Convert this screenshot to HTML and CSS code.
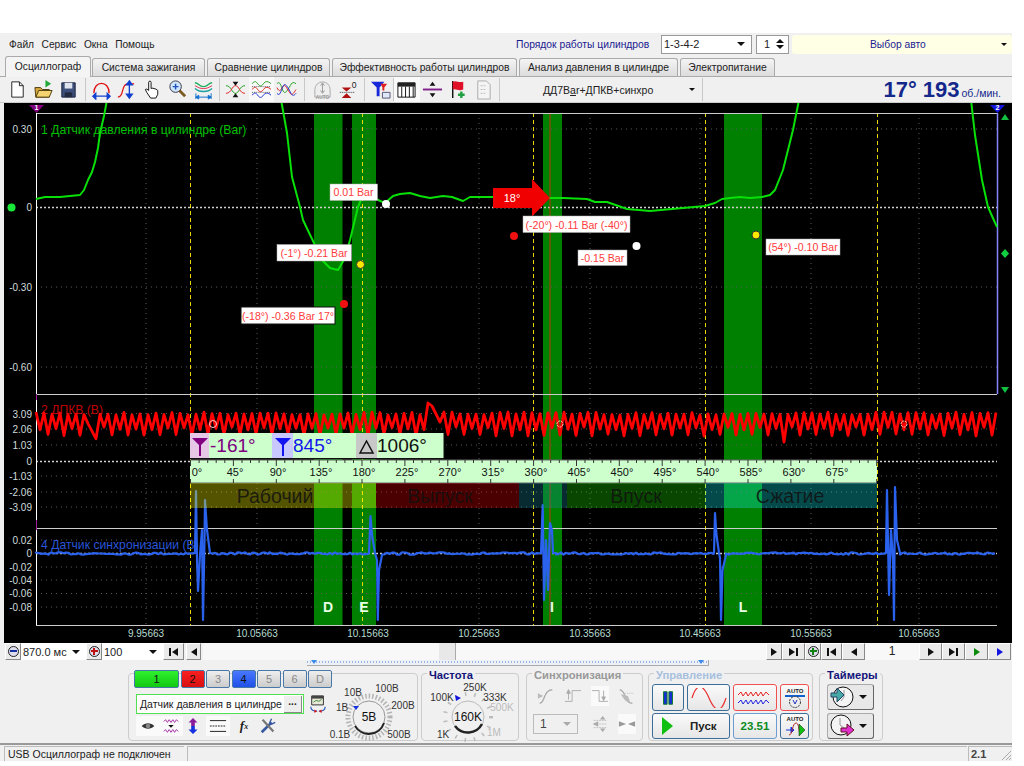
FILE: index.html
```html
<!DOCTYPE html>
<html lang="ru">
<head>
  <meta charset="UTF-8">
  <title>USB Осциллограф</title>
  <link rel="stylesheet" href="styles.css">
  <script defer src="script.js"></script>
</head>
<body>
<div class="app">

  <div class="topbar">
    <div class="menu"><span>Файл</span><span>Сервис</span><span>Окна</span><span>Помощь</span></div>
    <div class="order">
      <span class="order-label">Порядок работы цилиндров</span>
      <div class="combo order-combo"><span>1-3-4-2</span><i class="arrow"></i></div>
      <div class="combo spin"><span>1</span><b class="spin-arrows"><i class="arrow up"></i><i class="arrow"></i></b></div>
      <div class="auto-pick"><span>Выбор авто</span><i class="arrow small"></i></div>
    </div>
  </div>

  <div class="tabs">
    <div class="tab active">Осциллограф</div>
    <div class="tab w113">Система зажигания</div>
    <div class="tab w122">Сравнение цилиндров</div>
    <div class="tab w185">Эффективность работы цилиндров</div>
    <div class="tab w159">Анализ давления в цилиндре</div>
    <div class="tab w95">Электропитание</div>
  </div>

  <div class="toolbar">
    <div class="tool"><svg viewBox="0 0 22 22"><path d="M5 3h8l4 4v12H5z" fill="#fff" stroke="#222"/><path d="M13 3v4h4" fill="none" stroke="#222"/></svg></div>
    <div class="tool"><svg viewBox="0 0 22 22"><path d="M2 9h6l2 2h7v8H3z" fill="#d8a93a" stroke="#4a3a10"/><path d="M3 19l3-7h14l-3 7z" fill="#f3d470" stroke="#4a3a10"/><path d="M13 7V1l6 4-6 4z" fill="#21a83a"/></svg></div>
    <div class="tool"><svg viewBox="0 0 22 22"><path d="M4 4h14v15H4z" fill="#3d4f7a" stroke="#1a2340"/><path d="M7 4h8v6H7z" fill="#dfe4ee"/><path d="M7 14h8v5H7z" fill="#222a40"/></svg></div>
    <i class="sep"></i>
    <div class="tool"><svg viewBox="0 0 22 22"><path d="M3 15C3 1 19 1 19 15" fill="none" stroke="#e01010" stroke-width="1.4"/><path d="M2 18h18M2 18l3-3v6zM20 18l-3-3v6z" stroke="#1040d0" fill="#1040d0" stroke-width="1.4"/></svg></div>
    <div class="tool"><svg viewBox="0 0 22 22"><path d="M2 19c7 0 3-14 10-14h7" fill="none" stroke="#e01010" stroke-width="1.3"/><path d="M14 3v16M14 2l-3 4h6zM14 20l-3-4h6z" stroke="#1040d0" fill="#1040d0" stroke-width="1.4"/></svg></div>
    <div class="tool"><svg viewBox="0 0 22 22"><path d="M7 12V3.500a1.200 1.200 0 0 1 2.500 0V10l1-.5 2 .5 2 .5 2 1.500v4l-2 4H9l-4-6-1.500-3 1.500-.5z" fill="#fff" stroke="#111"/></svg></div>
    <div class="tool"><svg viewBox="0 0 22 22"><circle cx="9" cy="8" r="6" fill="#cfe6ff" stroke="#334"/><path d="M9 5v6M6 8h6" stroke="#2050c0" stroke-width="1.500"/><path d="M13 12l6 6" stroke="#7a5a20" stroke-width="3"/></svg></div>
    <div class="tool"><svg viewBox="0 0 22 22"><path d="M2 4c4 0 4 4 9 4s5-4 9-4" fill="none" stroke="#20b060" stroke-width="1.500"/><path d="M2 10c4 3 5 3 9 3s5 0 9-3" fill="none" stroke="#20a0a0" stroke-width="1.500"/><path d="M2 7c4 2 5 3 9 3s5-1 9-3" fill="none" stroke="#e03050" stroke-width="1"/><path d="M3 19h16M3 19l3-2v4zM19 19l-3-2v4zM3 15v6M19 15v6" stroke="#1070d0" fill="#1070d0"/></svg></div>
    <i class="sep"></i>
    <div class="tool"><svg viewBox="0 0 22 22"><path d="M1 7c6 0 6 8 10 8s4-8 10-8" fill="none" stroke="#20a020"/><path d="M1 15c6 0 6-8 10-8s4 8 10 8" fill="none" stroke="#e02020"/><path d="M8 3h6l-3 4zM8 19h6l-3-4z" fill="#111"/></svg></div>
    <div class="tool pressed"><svg viewBox="0 0 22 22"><path d="M1 5c3-3 4-3 6 0s4 3 6 0 5-3 8 0" fill="none" stroke="#20a020"/><path d="M1 11c3-3 4-3 6 0s4 3 6 0 5-3 8 0" fill="none" stroke="#e02020"/><path d="M1 17c3-3 4-3 6 0s4 3 6 0 5-3 8 0" fill="none" stroke="#2030d0"/><path d="M1 8h20M1 14h20" stroke="#555" stroke-dasharray="1 1"/></svg></div>
    <div class="tool"><svg viewBox="0 0 22 22"><path d="M1 5c5-6 5 14 10 8s5-12 10-8" fill="none" stroke="#20a020"/><path d="M1 9c5 10 5-8 10 0s5 10 10 2" fill="none" stroke="#e02020"/><path d="M1 15c5 6 5-14 10-8s5 14 10 8" fill="none" stroke="#2030d0"/></svg></div>
    <i class="sep wide"></i>
    <div class="tool"><svg viewBox="0 0 22 22"><path d="M3 19V11a8 8 0 0 1 16 0v8z" fill="#eee" stroke="#aaa"/><path d="M11 5v9M9 7l2-3 2 3M9 12l2 3 2-3" fill="none" stroke="#999"/><text x="11" y="21" class="icon-note">AUTO</text></svg></div>
    <div class="tool"><svg viewBox="0 0 22 22"><path d="M5 9h10l-5 4zM5 20h10l-5-5z" fill="#b01010"/><path d="M3 14h16" stroke="#333" stroke-dasharray="1 1"/><text x="18" y="9" class="icon-digit">0</text></svg></div>
    <i class="sep"></i>
    <div class="tool"><svg viewBox="0 0 22 22"><path d="M1 3h14L10 9v9H7V9z" fill="#1828d8"/><path d="M11 5h7l-3 4v3h-2V9z" fill="#e02020"/><path d="M13 14h8v6h-8z" fill="#dfe8f8" stroke="#557"/></svg></div>
    <i class="sep flat"></i>
    <div class="tool pressed"><svg viewBox="0 0 22 22"><path d="M2 4h18v15H2z" fill="#fff" stroke="#111"/><path d="M2 4h18v4H2z" fill="#222"/><path d="M6 8v11M10 8v11M14 8v11M18 8v11" stroke="#111"/></svg></div>
    <div class="tool"><svg viewBox="0 0 22 22"><path d="M1 11h20" stroke="#80208a" stroke-width="2"/><path d="M8 7h6l-3-4zM8 15h6l-3 4z" fill="#111"/></svg></div>
    <div class="tool"><svg viewBox="0 0 22 22"><path d="M6 2v18" stroke="#111" stroke-width="1.500"/><path d="M6 3c4-2 5 1 11 0v8c-5 2-7-1-11 0z" fill="#e01028"/><path d="M15 13v7M11.500 16.500h7" stroke="#20a040" stroke-width="2.500"/></svg></div>
    <div class="tool"><svg viewBox="0 0 22 22"><path d="M5 2h9l4 4v15H5z" fill="#f4f4f4" stroke="#aaa"/><path d="M8 7h6M8 11h6M8 15h6" stroke="#bbb" stroke-dasharray="2 1"/></svg></div>
    <i class="sep"></i>
    <div class="preset"><span>ДД7B<u>a</u>r+ДПКВ+синхро</span><i class="arrow small"></i></div>
    <i class="sep flat"></i>
    <div class="rpm"><b>17° 193</b><span>об./мин.</span></div>
  </div>

  <div class="chart">
    <svg class="scope" viewBox="4 103 1008 540" width="1008" height="540">
      <rect x="4" y="103" width="1008" height="540" fill="#000"/>

      <g fill="#008000">
        <rect x="314" y="113" width="28.500" height="512"/>
        <rect x="352" y="113" width="24" height="512"/>
        <rect x="543" y="113" width="19" height="512"/>
        <rect x="724" y="113" width="38" height="512"/>
      </g>

      <path class="grid" d="M146 113V625M257 113V625M368 113V625M479 113V625M590 113V625M700 113V625M811 113V625M919 113V625M36 129H997M36 287H997M36 367H997M36 413.500H997M36 429H997M36 445H997M36 476H997M36 492H997M36 507H997M36 540H997M36 567H997M36 580H997M36 593.500H997M36 607H997"/>
      <path class="zero" d="M36 207.500H997M36 461.500H997M36 553.500H997"/>
      <path class="marks" d="M190.500 113V625M362.500 113V625M533.500 113V625M705.500 113V625M877.500 113V625"/>
      <path d="M550 113V625" stroke="#c03010" stroke-width="1"/>

      <g class="frame">
        <path d="M36 113.500H997M36 394.500H997M36 528.500H997M36 625.500H997" stroke="#ccc"/>
        <path d="M36.500 113V625" stroke="#fff"/>
        <path d="M36.500 394V400M36.500 520V530" stroke="#a020a0"/>
        <path d="M997.500 113V394" stroke="#8484ff" stroke-width="1.500"/>
      </g>

      <path d="M29 105H44L36.500 113z" fill="#800080"/>
      <text x="36.500" y="110" class="pin">1</text>
      <path d="M990 105H1005L997.500 113z" fill="#1414e0"/>
      <text x="997.500" y="110" class="pin">2</text>
      <path d="M1001 120L1005 114 1009 120z" fill="#10c040"/>
      <path d="M1005 249L1009 253.500 1005 258 1001 253.500z" fill="#10d040"/>
      <path d="M1001 387L1005 393 1009 387z" fill="#10c040"/>
      <circle cx="11.500" cy="207.500" r="4" fill="#18e838"/>

      <g class="axis">
        <text x="32" y="133">0.30</text><text x="32" y="211">0</text><text x="32" y="291">-0.30</text><text x="32" y="371">-0.60</text>
        <text x="32" y="418">3.09</text><text x="32" y="433">2.06</text><text x="32" y="449">1.03</text><text x="32" y="465">0</text><text x="32" y="480">-1.03</text><text x="32" y="496">-2.06</text><text x="32" y="511">-3.09</text>
        <text x="32" y="544">0.02</text><text x="32" y="557">0</text><text x="32" y="571">-0.02</text><text x="32" y="584">-0.04</text><text x="32" y="597">-0.06</text><text x="32" y="611">-0.08</text>
      </g>
      <g class="time">
        <text x="146" y="637">9.95663</text><text x="257" y="637">10.05663</text><text x="368" y="637">10.15663</text><text x="479" y="637">10.25663</text><text x="590" y="637">10.35663</text><text x="700" y="637">10.45663</text><text x="811" y="637">10.55663</text><text x="919" y="637">10.65663</text>
      </g>

      <text x="41" y="134" class="chan ch1">1 Датчик давления в цилиндре (Bar)</text>
      <text x="41" y="414" class="chan ch2">2 ДПКВ (B)</text>
      <text x="41" y="549" class="chan ch4">4 Датчик синхронизации (B)</text>

      <path id="red-trace" class="trace-red"/>
      <path id="blue-trace" class="trace-blue"/>
      <polyline class="trace-green" points="36,199 45,197 60,197 80,195 84,190 88,180 92,172 95,162 98,148 100,133 104,116 107,100"/>
      <polyline class="trace-green" points="281,100 282,105 287,133 292,177 300,207 303,220 313,241 322,260 330,268 338,270 345,258 350,240 358,207 363,195 370,190 378,200 385,203 393,196 400,194 410,193 420,196 430,198 443,196 452,197 463,201 470,197 493,197 510,197 530,198 563,198 587,199 595,202 607,202 627,209 650,211 683,208 705,206 715,203 722,199 730,198 740,197 750,198 762,197 770,195 775,190 783,170 793,130 799,100"/>
      <polyline class="trace-green" points="971,100 975,135 982,180 988,207 992,216 997,227"/>

      <text x="328" y="612" class="band-name">D</text>
      <text x="364" y="612" class="band-name">E</text>
      <text x="552" y="612" class="band-name">I</text>
      <text x="743" y="612" class="band-name">L</text>

      <g class="cursor-row">
        <rect x="190" y="433" width="254" height="25" fill="#ccffcc"/>
        <path d="M444 433V458.500H190" fill="none" stroke="#111"/>
        <rect x="190" y="433" width="19" height="25" fill="#e6c8e6"/>
        <rect x="272" y="433" width="21" height="25" fill="#c8c8ff"/>
        <rect x="356" y="433" width="21" height="25" fill="#c8c8c8"/>
        <path d="M192 438H208L201 445V456H199V445z" fill="#800080"/>
        <path d="M275 438H291L284 445V456H282V445z" fill="#1414f0"/>
        <path d="M360 453L366.500 441 373 453z" fill="none" stroke="#111" stroke-width="1.500"/>
        <text x="210" y="452" class="cursor-val pur">-161°</text>
        <text x="293" y="452" class="cursor-val blu">845°</text>
        <text x="377" y="452" class="cursor-val blk">1006°</text>
      </g>

      <rect x="190" y="460" width="687" height="23" fill="#ccffcc"/>
      <path d="M190 460H877M190 483H877" stroke="#666"/>
      <path id="ruler-ticks" stroke="#333" fill="none"/>
      <g class="ruler">
        <text x="197" y="476">0°</text><text x="235" y="476">45°</text><text x="278" y="476">90°</text><text x="321" y="476">135°</text><text x="364" y="476">180°</text><text x="407" y="476">225°</text><text x="450" y="476">270°</text><text x="493" y="476">315°</text><text x="536" y="476">360°</text><text x="579" y="476">405°</text><text x="622" y="476">450°</text><text x="665" y="476">495°</text><text x="708" y="476">540°</text><text x="751" y="476">585°</text><text x="794" y="476">630°</text><text x="837" y="476">675°</text>
      </g>

      <g class="strokes">
        <rect x="190" y="483" width="186" height="25" fill="#ffff00" fill-opacity=".33"/>
        <rect x="376" y="483" width="143" height="25" fill="#ff0000" fill-opacity=".29"/>
        <rect x="519" y="483" width="48" height="25" fill="#1890a0" fill-opacity=".3"/>
        <rect x="567" y="483" width="138" height="25" fill="#20ff00" fill-opacity=".28"/>
        <rect x="705" y="483" width="172" height="25" fill="#10ffff" fill-opacity=".29"/>
        <text x="275" y="503">Рабочий</text>
        <text x="440" y="503">Выпуск</text>
        <text x="636" y="503">Впуск</text>
        <text x="790" y="503">Сжатие</text>
      </g>

      <g class="notes">
        <path d="M493 188H532V179L550 198 532 216.500V208H493z" fill="#f00000"/>
        <text x="512" y="202" class="arrow-val">18°</text>

        <rect x="330" y="184" width="47.500" height="16.500" class="note-box"/><text x="353.500" y="196">0.01 Bar</text>
        <rect x="277" y="244.500" width="74.500" height="16.500" class="note-box"/><text x="314" y="257">(-1°) -0.21 Bar</text>
        <rect x="241" y="307" width="94" height="17" class="note-box dark"/><text x="288" y="319.500">(-18°) -0.36 Bar 17°</text>
        <rect x="523" y="216" width="107" height="16.500" class="note-box"/><text x="576.500" y="228.500">(-20°) -0.11 Bar (-40°)</text>
        <rect x="578" y="250" width="49" height="15.500" class="note-box"/><text x="602.500" y="262">-0.15 Bar</text>
        <rect x="766" y="239" width="74" height="16" class="note-box"/><text x="803" y="251">(54°) -0.10 Bar</text>

        <circle cx="386" cy="204" r="4" fill="#fff"/>
        <circle cx="360.500" cy="264.500" r="4" fill="#ffe800" stroke="#333"/>
        <circle cx="344" cy="304" r="4" fill="#f01010"/>
        <circle cx="514" cy="236" r="4" fill="#f01010"/>
        <circle cx="636.500" cy="246" r="4" fill="#fff"/>
        <circle cx="756" cy="235" r="4" fill="#ffe800" stroke="#333"/>
        <circle cx="213" cy="424" r="3.500" fill="none" stroke="#ffc8c8"/>
        <circle cx="560" cy="424" r="3" fill="none" stroke="#ffc8c8" stroke-dasharray="2 1"/>
        <circle cx="904" cy="424" r="3" fill="none" stroke="#ffc8c8" stroke-dasharray="2 1"/>
      </g>
    </svg>
  </div>

  <div class="scrollrow">
    <div class="sbtn round"><i class="minus"></i></div>
    <div class="field w64"><span>870.0 мс</span><i class="arrow"></i></div>
    <div class="sbtn round"><i class="plus red"></i></div>
    <div class="field w61"><span>100</span><i class="arrow"></i></div>
    <div class="sbtn w21"><i class="bar"></i><i class="tri left"></i></div>
    <div class="sbtn w15"><i class="tri left"></i></div>
    <div class="track"><div class="thumb"></div></div>
    <div class="sbtn w16"><i class="tri"></i></div>
    <div class="sbtn w23"><i class="tri"></i><i class="bar"></i></div>
    <div class="sbtn round w17"><i class="plus green"></i></div>
    <div class="sbtn w21"><i class="bar"></i><i class="tri left"></i></div>
    <div class="sbtn w23"><i class="tri left"></i></div>
    <div class="pageno">1</div>
    <div class="sbtn w23"><i class="tri"></i></div>
    <div class="sbtn w23"><i class="tri"></i><i class="bar"></i></div>
    <div class="sbtn w23"><i class="tri gr"></i></div>
    <div class="sbtn w23"><i class="tri bl"></i></div>
  </div>

  <div class="rangebar"><div class="range"></div></div>

  <div class="panels">
    <div class="panel p-chan">
      <div class="chan-left">
        <div class="chan-tabs">
          <div class="ch-btn first on-green">1</div>
          <div class="ch-btn on-red">2</div>
          <div class="ch-btn off">3</div>
          <div class="ch-btn on-blue">4</div>
          <div class="ch-btn off">5</div>
          <div class="ch-btn off">6</div>
          <div class="ch-btn off">D</div>
        </div>
        <div class="chan-name">
          <div class="name-box"><span>Датчик давления в цилиндре</span><b>...</b></div>
          <svg class="ico18" viewBox="0 0 20 20"><path d="M3 1h13v10H3z" fill="#e8e8d8" stroke="#222"/><path d="M3 1h13v3H3z" fill="#444"/><path d="M5 8l3-2 3 1 3-2" fill="none" stroke="#383"/><path d="M2 13c0 4 4 5 7 5M18 13c0 4-4 5-7 5" fill="none" stroke="#25b" stroke-width="1.300"/><path d="M6 16l3 2-3 2zM14 16l-3 2 3 2z" fill="#d11"/></svg>
        </div>
        <div class="chan-tools">
          <div class="mini pressed w23"><svg viewBox="0 0 20 20"><path d="M3 10c4-4 10-4 14 0-4 4-10 4-14 0z" fill="#333"/><circle cx="10" cy="10" r="2.500" fill="#888"/></svg></div>
          <div class="mini pressed w24"><svg viewBox="0 0 20 20"><path d="M2 5l2-2 2 3 2-3 2 3 2-3 2 3 2-3 2 2" fill="none" stroke="#a020a0"/><path d="M2 16l2-2 2 3 2-3 2 3 2-3 2 3 2-3 2 2" fill="none" stroke="#a020a0"/><path d="M7 9h6l-3 3z" fill="#111"/></svg></div>
          <div class="mini w20"><svg viewBox="0 0 20 20"><path d="M10 1l5 5h-3v4H8V6H5z" fill="#8a1a9a"/><path d="M10 19l5-5h-3v-4H8v4H5z" fill="#1430e0"/></svg></div>
          <div class="mini pressed w24 gap3"><svg viewBox="0 0 20 20"><path d="M1 4h18M1 16h18" stroke="#111"/><path d="M1 10h18" stroke="#111" stroke-dasharray="2 1"/></svg></div>
          <div class="mini fx w20">f<sub>x</sub></div>
          <div class="mini w20"><svg viewBox="0 0 20 20"><path d="M3 17L14 6" stroke="#3858a0" stroke-width="3"/><path d="M14 2l-2 4 2 2 4-2" fill="none" stroke="#3858a0" stroke-width="1.500"/><path d="M4 3l12 13" stroke="#777" stroke-width="2.500"/></svg></div>
        </div>
      </div>
      <svg class="knob" viewBox="0 0 88 62" width="88" height="62">
        <circle cx="39" cy="37" r="21" fill="none" stroke="#b4b4b4" stroke-width="5" stroke-dasharray="1.500 2"/>
        <circle cx="39" cy="37" r="16" fill="#f0f0f0" stroke="#999"/>
        <path d="M25 46a16 16 0 0 0 29-3" fill="none" stroke="#222" stroke-width="2"/>
        <path d="M23 26h6l-3 4z" fill="#1430e0"/>
        <text x="39" y="41" class="knob-mid">5В</text>
        <text x="23" y="16">10В</text><text x="57" y="12">100В</text><text x="73" y="29">200В</text><text x="12" y="31">1В</text><text x="10" y="58">0.1В</text><text x="69" y="58">500В</text>
      </svg>
    </div>

    <div class="panel p-freq">
      <span class="panel-title navy">Частота</span>
      <svg class="knob" viewBox="0 0 98 66" width="98" height="66">
        <circle cx="46" cy="43" r="23" fill="none" stroke="#bbb" stroke-width="4" stroke-dasharray="1.500 8"/>
        <circle cx="46" cy="43" r="16" fill="#f0f0f0" stroke="#bbb"/>
        <path d="M33 52a16 16 0 0 0 27-2" fill="none" stroke="#222" stroke-width="2.500"/>
        <path d="M33 21l6 3-5 3z" fill="#1414e0"/>
        <text x="46" y="47" class="knob-mid">160K</text>
        <text x="20" y="26.500">100K</text><text x="53" y="17">250K</text><text x="73" y="26.500">333K</text><text x="80" y="37" class="dim">500K</text><text x="21" y="64">1K</text><text x="72" y="62" class="dim">1M</text>
      </svg>
    </div>

    <div class="panel p-sync">
      <span class="panel-title grey">Синхронизация</span>
      <div class="sync-grid">
        <div class="mini"><svg viewBox="0 0 20 20"><path d="M3 18c6 0 4-15 14-15" fill="none" stroke="#aaa" stroke-width="1.500"/><path d="M1 7l6 3-6 3z" fill="#bbb"/></svg></div>
        <div class="mini"><svg viewBox="0 0 20 20"><path d="M1 16h8V4h10" fill="none" stroke="#aaa"/><path d="M5 3v11M3 7l2-4 2 4z" stroke="#aaa" fill="#aaa"/></svg></div>
        <div class="mini pressed"><svg viewBox="0 0 20 20"><path d="M1 4h8v12h10" fill="none" stroke="#aaa"/><path d="M14 4v11M12 11l2 4 2-4z" stroke="#aaa" fill="#aaa"/></svg></div>
        <div class="mini"><svg viewBox="0 0 20 20"><path d="M2 3c8 2 4 15 14 15" fill="none" stroke="#aaa" stroke-width="1.500"/><path d="M8 7h10" stroke="#bbb" stroke-dasharray="1 1"/><path d="M3 8l8 2 3 8-6-3z" fill="#bbb"/></svg></div>
        <div class="combo sync-combo"><span>1</span><i class="arrow pale"></i></div>
        <div class="mini"><svg viewBox="0 0 20 20"><path d="M3 10h14M3 6h14M3 14h14" stroke="#bbb" stroke-dasharray="2 1"/><path d="M2 10l6-3v6zM10 5h6l-3-4zM10 15h6l-3 4z" fill="#aaa"/></svg></div>
        <div class="mini pressed"><svg viewBox="0 0 20 20"><path d="M1 7l8 3-8 3zM19 7l-8 3 8 3z" fill="#999"/></svg></div>
      </div>
    </div>

    <div class="panel p-ctl">
      <span class="panel-title pale">Управление</span>
      <div class="ctl-grid">
        <div class="ctl"><svg viewBox="0 0 20 20" class="ico18"><path d="M5 3h4v14H5zM11 3h4v14h-4z" fill="#1430d0" stroke="#0b7a20"/></svg></div>
        <div class="ctl"><svg viewBox="0 0 36 20" class="ico-w"><path d="M1 10C6-6 12-4 18 10s12 16 17 0" fill="none" stroke="#e83030" stroke-width="1.200"/></svg></div>
        <div class="ctl red-edge"><svg viewBox="0 0 36 20" class="ico-w"><path d="M1 7l3-3 2 4 3-4 2 4 3-4 2 4 3-4 2 4 3-4 2 4 3-4 3 3" fill="none" stroke="#e82020"/><path d="M1 15l3-3 2 4 3-4 2 4 3-4 2 4 3-4 2 4 3-4 2 4 3-4 3 3" fill="none" stroke="#2020e0"/></svg></div>
        <div class="ctl red-edge"><svg viewBox="0 0 22 22" class="ico20"><text x="11" y="6" class="auto-note">AUTO</text><path d="M1 9h20" stroke="#1060d0" stroke-width="2"/><circle cx="11" cy="15" r="5.500" fill="#eee" stroke="#333" stroke-dasharray="2 1"/><path d="M9 13l2 4 2-4" fill="none" stroke="#2030c0"/></svg></div>
        <div class="ctl span2 start"><i class="play"></i><b>Пуск</b></div>
        <div class="ctl pale-edge value">23.51</div>
        <div class="ctl"><svg viewBox="0 0 22 22" class="ico20"><text x="11" y="6" class="auto-note">AUTO</text><path d="M2 15h8M7 12l3 3-3 3z" fill="#1430e0" stroke="#1430e0"/><path d="M5 20c4 0 3-12 7-12s2 12 5 10" fill="none" stroke="#b03030"/><path d="M15 9l6 6-6 6z" fill="#10c010" stroke="#111" stroke-width=".5"/></svg></div>
      </div>
    </div>

    <div class="panel p-time">
      <span class="panel-title navy">Таймеры</span>
      <div class="time-col">
        <div class="ctl grey-edge"><svg viewBox="0 0 24 24" class="ico22"><circle cx="13" cy="12" r="10" fill="#f4f4f4" stroke="#111"/><path d="M14 5v7l-3 4" fill="none" stroke="#999"/><path d="M1 8h6V3l7 7-7 7v-5H1z" fill="#48a8a8" stroke="#246"/></svg><i class="arrow"></i></div>
        <div class="ctl grey-edge"><svg viewBox="0 0 24 24" class="ico22"><circle cx="11" cy="11" r="10" fill="#f4f4f4" stroke="#111"/><path d="M10 4v7l4 3" fill="none" stroke="#999"/><path d="M11 14h6V10l7 6-7 6v-4h-6z" fill="#e030d0" stroke="#612"/></svg><i class="arrow"></i></div>
      </div>
    </div>
  </div>

  <div class="status">
    <div class="cell c1">USB Осциллограф не подключен</div>
    <div class="cell c2"></div>
    <div class="cell c3"><span>2.1</span><svg class="grip" viewBox="0 0 12 12" width="12" height="12"><path d="M11 2L2 11M11 6L6 11M11 9L9 11" stroke="#aaa"/></svg></div>
  </div>

</div>
</body>
</html>
```

FILE: styles.css
```css
body {
  margin: 0;
  padding: 0;
  background-color: white;
  font-family: "Liberation Sans", Arial, sans-serif;
  font-size: 10.5px;
  color: #222;
  overflow: hidden;
}

.app {
  width: 1012px;
  height: 728px;
  margin-top: 33px;
  background-color: #f0f0f0;
  display: flex;
  flex-direction: column;
}

/* top row */
.topbar {
  height: 22px;
  display: flex;
  align-items: center;
  justify-content: space-between;
}

.menu {
  display: flex;
  gap: 7.5px;
  padding-left: 9px;
  font-size: 10.2px;
}

.order {
  display: flex;
  align-items: center;
  height: 19px;
  font-size: 10.3px;
}

.order-label {
  color: #1a1a90;
  width: 145px;
}

.combo {
  background-color: white;
  border: 1px solid #999;
  box-sizing: border-box;
  height: 19px;
  display: flex;
  align-items: center;
  justify-content: space-between;
  padding: 0 6px 0 2px;
  font-size: 11px;
}

.order-combo { width: 91px; }

.spin {
  width: 33px;
  margin-left: 4px;
  padding: 0 4px 0 7px;
}

.spin-arrows {
  display: flex;
  flex-direction: column;
  gap: 2px;
}

.auto-pick {
  width: 220px;
  height: 19px;
  margin-left: 3px;
  background-color: #ffffe6;
  border-radius: 3px;
  display: flex;
  align-items: center;
  justify-content: space-between;
  color: #1a1a90;
  padding: 0 5px 0 78px;
  box-sizing: border-box;
}

.arrow {
  display: block;
  width: 0;
  height: 0;
  border-left: 4px solid transparent;
  border-right: 4px solid transparent;
  border-top: 4px solid #111;
}

.arrow.up {
  border-top: 0;
  border-bottom: 4px solid #111;
}

.arrow.small {
  border-left-width: 3px;
  border-right-width: 3px;
  border-top-width: 3px;
}

.arrow.pale { border-top-color: #aaa; }

/* tabs */
.tabs {
  height: 21px;
  display: flex;
  align-items: flex-end;
  gap: 2px;
  padding-left: 5px;
  border-bottom: 1px solid #aaa;
  font-size: 10.3px;
}

.tab {
  height: 18px;
  box-sizing: border-box;
  border: 1px solid #aaa;
  border-bottom: 0;
  border-radius: 3px 3px 0 0;
  background: linear-gradient(#f4f4f4, #dcdcdc);
  text-align: center;
  line-height: 17px;
  white-space: nowrap;
}

.tab.active {
  width: 86px;
  height: 21px;
  background: #f4f4f4;
  margin-bottom: -1px;
  line-height: 19px;
  margin-right: -1px;
}

.w113 { width: 113px; }
.w122 { width: 123px; }
.w185 { width: 185px; }
.w159 { width: 159px; }
.w95 { width: 95px; }

/* toolbar */
.toolbar {
  height: 26px;
  display: flex;
  align-items: center;
  padding-left: 5px;
  box-sizing: border-box;
  border-bottom: 1px solid #ccc;
}

.tool {
  width: 25.5px;
  height: 25px;
  display: flex;
  align-items: center;
  justify-content: center;
}

.tool svg {
  width: 21px;
  height: 21px;
}

.pressed { background-color: #fafafa; }

.sep {
  width: 1px;
  height: 23px;
  margin: 0 3px;
  background-color: #c8c8c8;
}

.sep.wide { margin: 0 5px 0 4px; }
.sep.flat { margin: 0; }

.icon-note {
  font-size: 5px;
  fill: #999;
  text-anchor: middle;
  font-weight: bold;
}

.icon-digit {
  font-size: 9px;
  fill: #222;
  text-anchor: middle;
}

.preset {
  width: 199px;
  display: flex;
  align-items: center;
  justify-content: space-between;
  padding: 0 7px 0 40px;
  box-sizing: border-box;
}

.rpm {
  flex: 1;
  text-align: right;
  padding-right: 11px;
  color: #14288c;
}

.rpm b {
  font-size: 22px;
  line-height: 24px;
}

.rpm span {
  font-size: 10.5px;
  margin-left: 2px;
}

/* chart */
.chart {
  height: 540px;
  padding-left: 4px;
}

.scope {
  display: block;
  font-family: "Liberation Sans", Arial, sans-serif;
}

.grid {
  stroke: #5a5a5a;
  stroke-dasharray: 1 4;
  fill: none;
}

.zero {
  stroke: #cfcfcf;
  stroke-dasharray: 2 2;
  stroke-width: 1.300;
  fill: none;
}

.marks {
  stroke: #e8d800;
  stroke-dasharray: 4 3;
  fill: none;
}

.pin {
  font-size: 7px;
  font-weight: bold;
  fill: white;
  text-anchor: middle;
}

.axis text {
  font-size: 10px;
  fill: #d0dcdc;
  text-anchor: end;
}

.time text {
  font-size: 10px;
  fill: #b8dcd0;
  text-anchor: middle;
}

.chan { font-size: 12.2px; }
.ch1 { fill: #00c000; }
.ch2 { fill: #c00000; }
.ch4 { fill: #2a55d8; }

.trace-red {
  fill: none;
  stroke: #ff0000;
  stroke-width: 2.800;
  stroke-linejoin: round;
}

.trace-blue {
  fill: none;
  stroke: #2a62ee;
  stroke-width: 2.200;
  stroke-linejoin: round;
}

.trace-green {
  fill: none;
  stroke: #08e008;
  stroke-width: 2;
  stroke-linejoin: round;
}

.band-name {
  font-size: 14px;
  font-weight: bold;
  fill: #e8ffe8;
  text-anchor: middle;
}

.cursor-val {
  font-size: 19px;
}

.pur { fill: #800080; }
.blu { fill: #1414f0; }
.blk { fill: #111; }

.ruler text {
  font-size: 11px;
  fill: #111;
  text-anchor: middle;
}

.strokes text {
  font-size: 19.5px;
  fill: #111;
  fill-opacity: .85;
  text-anchor: middle;
}

.notes text {
  font-size: 10.6px;
  fill: #ff3c3c;
  text-anchor: middle;
}

.notes .arrow-val {
  font-size: 11px;
  fill: white;
}

.note-box {
  fill: white;
  stroke: #aaa;
  stroke-width: .5;
}

.note-box.dark {
  stroke: #111;
  stroke-width: 1;
}

/* scroll row */
.scrollrow {
  height: 17px;
  display: flex;
  align-items: stretch;
  padding-left: 5px;
  box-sizing: border-box;
}

.sbtn {
  width: 15px;
  box-sizing: border-box;
  background-color: #eaeaea;
  border-right: 1px solid #888;
  border-bottom: 1px solid #888;
  border-top: 1px solid #fff;
  border-left: 1px solid #fff;
  display: flex;
  align-items: center;
  justify-content: center;
  gap: 1px;
  flex-shrink: 0;
}

.w15 { width: 15px; margin-left: 2px; }
.w16 { width: 16px; }
.w17 { width: 17px; }
.w21 { width: 21px; }
.w23 { width: 23px; }
.round { width: 16px; }

.minus, .plus {
  display: block;
  position: relative;
  width: 11px;
  height: 11px;
  box-sizing: border-box;
  border: 1px solid #222;
  border-radius: 50%;
  background-color: #dde;
}

.minus::before, .plus::before {
  content: "";
  position: absolute;
  left: 1px;
  right: 1px;
  top: 3px;
  height: 2px;
  background-color: #1430a0;
}

.plus.red::before, .plus.red::after { background-color: #c01010; }
.plus.green::before, .plus.green::after { background-color: #108010; }

.plus::after {
  content: "";
  position: absolute;
  top: 1px;
  bottom: 1px;
  left: 3px;
  width: 2px;
}

.field {
  background-color: white;
  display: flex;
  align-items: center;
  justify-content: space-between;
  padding: 0 6px 0 2px;
  box-sizing: border-box;
  font-size: 11px;
}

.w64 { width: 65px; }
.w61 { width: 61px; }

.tri {
  display: block;
  width: 0;
  height: 0;
  border-top: 4px solid transparent;
  border-bottom: 4px solid transparent;
  border-left: 6px solid #111;
}

.tri.left {
  border-left: 0;
  border-right: 6px solid #111;
}

.tri.gr { border-left-color: #0a8a0a; }
.tri.bl { border-left-color: #1414e0; }

.bar {
  display: block;
  width: 2px;
  height: 8px;
  background-color: #111;
}

.track {
  width: 563px;
  margin-left: 2px;
  background-color: #f8f8f8;
  flex-shrink: 0;
}

.thumb {
  width: 16px;
  height: 100%;
  margin-left: 236px;
  background-color: #e8e8e8;
  border-right: 1px solid #aaa;
}

.pageno {
  width: 54px;
  text-align: center;
  font-size: 12px;
  line-height: 17px;
  background-color: #f8f8f8;
  flex-shrink: 0;
}

.rangebar {
  height: 6px;
  padding-left: 307px;
}

.range {
  position: relative;
  width: 402px;
  height: 6px;
  box-sizing: border-box;
  background-color: #eef0f8;
  border-bottom: 1px solid #aaa;
  border-right: 1px solid #aaa;
  background-image: linear-gradient(90deg, #9ab4e4 1px, transparent 1px);
  background-size: 3px 2px;
  background-repeat: repeat-x;
  background-position: 0 1px;
}

.range::before, .range::after {
  content: "";
  position: absolute;
  top: 0;
  border-left: 3px solid transparent;
  border-right: 3px solid transparent;
  border-top: 4px solid #3a8ae8;
}

.range::before { left: 4px; }
.range::after { right: 4px; }

/* bottom panels */
.panels {
  height: 79px;
  box-sizing: border-box;
  display: flex;
  padding: 7px 0 0 128px;
  border-bottom: 2px solid #999;
}

.panel {
  position: relative;
  height: 68px;
  box-sizing: border-box;
  border: 1px solid #ccc;
  border-radius: 4px;
  flex-shrink: 0;
}

.panel-title {
  position: absolute;
  top: -6px;
  left: 5px;
  padding: 0 2px;
  background-color: #f0f0f0;
  font-weight: bold;
  font-size: 11.2px;
  line-height: 14px;
  white-space: nowrap;
}

.navy { color: #14147a; }
.grey { color: #999; }
.pale { color: #a8c0de; }

.p-chan { width: 290px; margin-right: 3px; display: flex; }
.p-freq { width: 98px; margin-right: 7px; }
.p-sync { width: 117px; margin-right: 5px; }
.p-ctl { width: 165px; margin-right: 6px; }
.p-time { width: 64px; }

.chan-left {
  width: 196px;
  padding-left: 5px;
  flex-shrink: 0;
}

.chan-tabs {
  display: flex;
  gap: 1.500px;
  margin-top: -4px;
  width: 200px;
}

.ch-btn {
  width: 24px;
  height: 18px;
  box-sizing: border-box;
  border: 1px solid #4878a8;
  border-radius: 2px;
  text-align: center;
  line-height: 16px;
  font-size: 11px;
  color: #888;
  background: linear-gradient(#eee, #ccc);
}

.ch-btn.first { width: 45px; }
.on-green { background: linear-gradient(#30f030, #10c810); color: #111; }
.on-red { background: linear-gradient(#f82020, #d81010); color: #111; }
.on-blue { background: linear-gradient(#4878ff, #2050e8); color: #111; }

.chan-name {
  display: flex;
  align-items: center;
  gap: 5px;
  margin-top: 6px;
  padding-left: 2px;
}

.name-box {
  width: 168px;
  height: 20px;
  box-sizing: border-box;
  border: 1px solid #50e050;
  background-color: white;
  display: flex;
  align-items: center;
  justify-content: space-between;
  padding: 0 1px 0 3px;
  font-size: 10.5px;
  white-space: nowrap;
}

.name-box b {
  width: 17px;
  height: 16px;
  background-color: #eee;
  border-right: 1px solid #888;
  border-bottom: 1px solid #888;
  text-align: center;
  line-height: 11px;
  font-size: 10px;
}

.ico18 { width: 18px; height: 18px; }
.ico20 { width: 22px; height: 22px; }
.ico22 { width: 24px; height: 24px; }
.ico-w { width: 36px; height: 20px; }

.chan-tools {
  display: flex;
  align-items: center;
  margin-top: 2px;
  padding-left: 2px;
}

.mini {
  height: 20px;
  display: flex;
  align-items: center;
  justify-content: center;
  flex-shrink: 0;
}

.mini svg { width: 18px; height: 18px; }

.mini.w23 { width: 23px; }
.mini.w24 { width: 24px; }
.mini.w20 { width: 20px; }
.mini.gap3 { margin-left: 3px; margin-right: 4px; }

.mini.fx {
  font-family: "Liberation Serif", serif;
  font-style: italic;
  font-weight: bold;
  font-size: 13px;
  margin-right: 4px;
}

.fx sub { font-size: 8px; }

.knob {
  display: block;
  flex-shrink: 0;
  overflow: visible;
  font-family: "Liberation Sans", Arial, sans-serif;
}

.p-chan .knob { margin-top: 6px; }

.knob text {
  font-size: 10px;
  fill: #333;
  text-anchor: middle;
}

.knob .knob-mid { font-size: 12px; fill: #111; }
.knob .dim { fill: #bbb; }

.sync-grid {
  display: grid;
  grid-template-columns: repeat(4, 27px);
  grid-auto-rows: 26px;
  row-gap: 2px;
  padding: 9px 0 0 5px;
  align-items: center;
  justify-items: center;
}

.sync-combo {
  grid-column: span 2;
  width: 45px;
  height: 20px;
  background-color: transparent;
  border-color: #bbb;
  color: #444;
  font-size: 12px;
  padding-left: 6px;
  justify-self: start;
  margin-left: 1px;
}

.ctl-grid {
  display: grid;
  grid-template-columns: 32px 43px 44px 29px;
  grid-template-rows: 27px 26px;
  gap: 2px 3px;
  padding: 10px 0 0 3px;
}

.ctl {
  box-sizing: border-box;
  border: 1.500px solid #3c6c98;
  border-radius: 3px;
  background: linear-gradient(#fafafa, #e6e6e6);
  display: flex;
  align-items: center;
  justify-content: center;
}

.red-edge { border-color: #f05050; }
.pale-edge { border-color: #6c9cd0; }
.grey-edge {
  border: 1px solid #aaa;
  border-right-color: #666;
  border-bottom-color: #666;
  background: #e8e8e8;
  gap: 5px;
  justify-content: flex-end;
  padding-right: 6px;
}

.span2 { grid-column: span 2; }

.start {
  justify-content: flex-start;
  padding-left: 9px;
}

.start b {
  font-size: 11.5px;
  margin-left: 17px;
}

.play {
  display: block;
  width: 0;
  height: 0;
  border-top: 9px solid transparent;
  border-bottom: 9px solid transparent;
  border-left: 11px solid #10c010;
}

.value {
  color: #0a8a20;
  font-weight: bold;
  font-size: 11.5px;
}

.auto-note {
  font-size: 6px;
  font-weight: bold;
  text-anchor: middle;
  fill: #222;
}

.time-col {
  display: flex;
  flex-direction: column;
  gap: 3px;
  padding: 10px 0 0 7px;
}

.time-col .ctl {
  width: 47px;
  height: 26px;
}

/* status bar */
.status {
  flex: 1;
  display: flex;
  padding-top: 1px;
}

.cell {
  box-sizing: border-box;
  border-top: 1px solid #bbb;
  border-left: 1px solid #bbb;
  line-height: 14px;
}

.c1 { width: 180px; margin-left: 4px; padding-left: 3px; font-size: 10.5px; }
.c2 { width: 780px; margin-left: 3px; }

.c3 {
  width: 44px;
  margin-left: 1px;
  padding-left: 2px;
  font-size: 11px;
  font-weight: bold;
  color: #444;
  display: flex;
  justify-content: space-between;
  align-items: flex-end;
}

.grip { display: block; }
```

FILE: script.js
```js
// traces are long, so they are built here instead of being typed into the svg
var seed = 7;
function noise() {
  seed = (seed * 16807) % 2147483647;
  return seed / 2147483647;
}

function drawRed() {
  var d = "";
  var k = 0;
  for (var x = 36; x <= 997; x += 4) {
    var y;
    if (k % 2 == 0) {
      y = 412 + noise() * 3;
    } else if (k % 4 == 1) {
      y = 427 + noise() * 3;
    } else {
      y = 434 + noise() * 2;
    }
    if (x > 84 && x < 98) y = 416 + (x - 84) * 1.9;
    if (x >= 428 && x < 432) y = 403;
    if (x >= 432 && x < 442) y = 406 + (x - 432) * 2;
    if (x >= 780 && x < 790 && k % 2 == 1) y = 442;
    d += (d == "" ? "M" : "L") + x + " " + y.toFixed(1);
    k++;
  }
  document.getElementById("red-trace").setAttribute("d", d);
}

// each burst: [x, y] points that replace the flat line
var bursts = [
  [[195, 553], [196, 491], [197, 560], [198, 591], [200, 555], [202, 530], [203, 620], [204.5, 540], [205, 500], [207, 530], [210, 553]],
  [[369, 553], [370.5, 516], [372, 535], [375, 553], [377, 560], [377.8, 620], [379, 570], [382, 555]],
  [[541, 553], [542.7, 505], [544, 600], [546, 540], [548, 590], [550, 523], [552, 530], [553, 553], [556, 553]],
  [[714, 553], [715, 513], [716.5, 535], [719, 553], [720, 558], [721, 620], [722.5, 570], [726, 555]],
  [[886, 553], [887, 490], [889, 595], [891, 530], [893, 560], [894, 620], [895, 487], [897, 540], [900, 553]]
];

function drawBlue() {
  var d = "M36 553.5";
  var x = 36;
  for (var i = 0; i <= bursts.length; i++) {
    var end = i < bursts.length ? bursts[i][0][0] : 997;
    for (; x < end; x += 2.5) {
      d += "L" + x + " " + (553.5 + (noise() - 0.5) * 2.4).toFixed(1);
    }
    if (i < bursts.length) {
      for (var j = 0; j < bursts[i].length; j++) {
        d += "L" + bursts[i][j][0] + " " + bursts[i][j][1];
      }
      x = bursts[i][bursts[i].length - 1][0];
    }
  }
  document.getElementById("blue-trace").setAttribute("d", d);
}

function drawRuler() {
  var d = "";
  for (var a = 0; a <= 720; a += 9) {
    var x = 190.5 + a * 0.953;
    var h = a % 45 == 0 ? 6 : 3;
    d += "M" + x.toFixed(1) + " 460v" + h;
    if (a % 45 == 0) d += "M" + x.toFixed(1) + " 483v-4";
  }
  document.getElementById("ruler-ticks").setAttribute("d", d);
}

drawRed();
drawBlue();
drawRuler();
```
